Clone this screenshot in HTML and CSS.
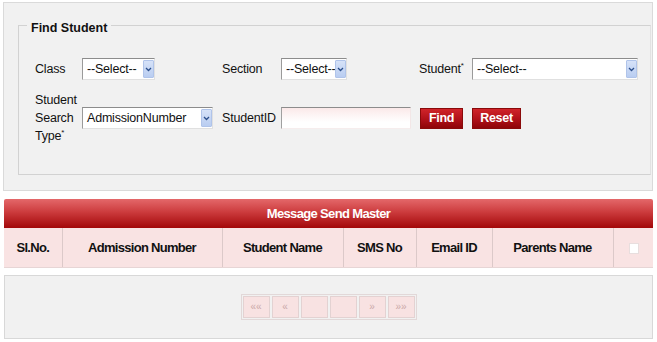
FILE: index.html
```
<!DOCTYPE html>
<html lang="en">

<head>
    <meta charset="UTF-8">
    <meta name="viewport" content="width=device-width, initial-scale=1.0">
    <title>Message Send Master</title>
    <link rel="stylesheet" href="styles.css">
</head>

<body>
    <div class="page">
        <div class="search-panel">
            <fieldset class="find-box">
                <legend>Find Student</legend>
                <div class="form-grid">
                    <label class="lbl">Class</label>
                    <div class="field">
                        <span class="select w-class">--Select--<span class="arrow"><svg width="7" height="5" viewBox="0 0 7 5"><path d="M1 1 L3.5 3.5 L6 1" fill="none" stroke="#2c4f8c" stroke-width="1.3"/></svg></span></span>
                    </div>
                    <label class="lbl">Section</label>
                    <div class="field">
                        <span class="select w-section">--Select--<span class="arrow"><svg width="7" height="5" viewBox="0 0 7 5"><path d="M1 1 L3.5 3.5 L6 1" fill="none" stroke="#2c4f8c" stroke-width="1.3"/></svg></span></span>
                    </div>
                    <label class="lbl">Student<sup>*</sup></label>
                    <div class="field">
                        <span class="select w-student">--Select--<span class="arrow"><svg width="7" height="5" viewBox="0 0 7 5"><path d="M1 1 L3.5 3.5 L6 1" fill="none" stroke="#2c4f8c" stroke-width="1.3"/></svg></span></span>
                    </div>

                    <label class="lbl multi">Student<br>Search<br>Type<sup>*</sup></label>
                    <div class="field">
                        <span class="select w-type">AdmissionNumber<span class="arrow"><svg width="7" height="5" viewBox="0 0 7 5"><path d="M1 1 L3.5 3.5 L6 1" fill="none" stroke="#2c4f8c" stroke-width="1.3"/></svg></span></span>
                    </div>
                    <label class="lbl">StudentID</label>
                    <div class="field">
                        <input class="text-input" type="text">
                    </div>
                    <div class="buttons">
                        <button class="btn btn-find">Find</button>
                        <button class="btn btn-reset">Reset</button>
                    </div>
                </div>
            </fieldset>
        </div>

        <div class="grid-title">Message Send Master</div>
        <table class="grid">
            <tr>
                <th class="c-sl">Sl.No.</th>
                <th class="c-adm">Admission Number</th>
                <th class="c-name">Student Name</th>
                <th class="c-sms">SMS No</th>
                <th class="c-email">Email ID</th>
                <th class="c-parent">Parents Name</th>
                <th class="c-check"><span class="check"></span></th>
            </tr>
        </table>

        <div class="pager-panel">
            <div class="pager">
                <span class="pg">&laquo;&laquo;</span>
                <span class="pg">&laquo;</span>
                <span class="pg"></span>
                <span class="pg"></span>
                <span class="pg">&raquo;</span>
                <span class="pg">&raquo;&raquo;</span>
            </div>
        </div>
    </div>
</body>

</html>
```

FILE: styles.css
```
* {
    margin: 0;
    padding: 0;
    box-sizing: border-box;
}

body {
    width: 657px;
    height: 342px;
    background-color: #fff;
    font-family: "Liberation Sans", Arial, sans-serif;
    font-size: 12px;
    color: #111;
}

.page {
    padding: 2px 4px 0 3px;
}

/* search area */
.search-panel {
    height: 189px;
    padding: 12px 1px 0 14px;
    background-color: #f1f1f1;
    border: 1px solid #dadada;
}

.find-box {
    height: 160px;
    padding: 23px 0 0 16px;
    border: 1px solid #d2d2d2;
    border-right-color: #e2e2e2;
}

.find-box legend {
    margin-left: -8px;
    padding: 6px 4px 0;
    font-weight: bold;
    font-size: 12.5px;
}

.form-grid {
    display: grid;
    grid-template-columns: 47px 140px 59px 138px 53px 170px;
    grid-template-rows: 22px 54px;
    row-gap: 11px;
    align-items: center;
}

.lbl {
    line-height: 18px;
    white-space: nowrap;
    font-size: 12.5px;
    letter-spacing: -0.2px;
}

.lbl sup {
    font-size: 8px;
    vertical-align: 5px;
    line-height: 0;
}

.field {
    display: flex;
    align-items: center;
}

.select {
    position: relative;
    display: block;
    height: 22px;
    padding-left: 4px;
    line-height: 20px;
    font-size: 12.5px;
    letter-spacing: -0.2px;
    background-color: #fff;
    border: 1px solid;
    border-color: #8c8c8c #e0e0e0 #e0e0e0 #9a9a9a;
}

.w-class { width: 73px; }
.w-section { width: 66px; }
.w-student { width: 166px; }
.w-type { width: 131px; }

.select .arrow {
    position: absolute;
    top: 1px;
    right: 0;
    width: 11px;
    height: 18px;
    display: flex;
    align-items: center;
    justify-content: center;
    background: linear-gradient(#d6e2f8, #b9cdf1);
    border: 1px solid #b0c4ea;
    border-radius: 1px;
}

.text-input {
    width: 130px;
    height: 22px;
    border: 1px solid;
    border-color: #8c8c8c #f2e6e6 #f6eded #a0a0a0;
    background: linear-gradient(#fbe9e9, #fff 70%);
    outline: none;
}

.buttons {
    grid-column: span 2;
    display: flex;
    gap: 9px;
    margin-left: 1px;
}

.btn {
    height: 21px;
    border: 1px solid #8a0a0a;
    color: #fff;
    font-family: "Liberation Sans", Arial, sans-serif;
    font-size: 12.5px;
    font-weight: bold;
    letter-spacing: -0.3px;
    background: linear-gradient(#d0242a, #b3121a 50%, #8e0508);
    cursor: pointer;
}

.btn-find { width: 43px; }
.btn-reset { width: 49px; }

/* grid */
.grid-title {
    margin: 8px 0 0 1px;
    height: 29px;
    line-height: 29px;
    text-align: center;
    color: #fff;
    font-size: 13px;
    font-weight: bold;
    letter-spacing: -0.65px;
    background: linear-gradient(#e4686a, #cc3b3d 45%, #a30709);
    border-radius: 2px 2px 0 0;
}

.grid {
    width: 649px;
    margin-left: 1px;
    border-collapse: collapse;
    background-color: #f9e3e3;
}

.grid th {
    height: 39px;
    font-size: 13px;
    font-weight: bold;
    letter-spacing: -0.7px;
    border-right: 1px solid #dcc9c9;
    border-bottom: 1px solid #e7d5d5;
}

.grid th:last-child {
    border-right: none;
}

.c-sl { width: 58px; }
.c-adm { width: 160px; }
.c-name { width: 121px; }
.c-sms { width: 73px; }
.c-email { width: 76px; }
.c-parent { width: 121px; }
.c-check { width: 40px; }

.check {
    display: inline-block;
    width: 10px;
    height: 11px;
    margin-left: 1px;
    background-color: #fff;
    border: 1px solid #e8dede;
    vertical-align: middle;
}

/* pager */
.pager-panel {
    display: flex;
    justify-content: center;
    align-items: center;
    height: 64px;
    margin: 7px 0 0 1px;
    background-color: #f1f1f1;
    border: 1px solid #d8d8d8;
}

.pager {
    display: flex;
    gap: 2px;
    padding: 1px;
    border: 1px solid #e2d8d8;
}

.pg {
    width: 27px;
    height: 22px;
    line-height: 20px;
    text-align: center;
    font-size: 10px;
    color: #cba9a9;
    background-color: #f8e2e2;
    border: 1px solid #e3d2d2;
}
```
